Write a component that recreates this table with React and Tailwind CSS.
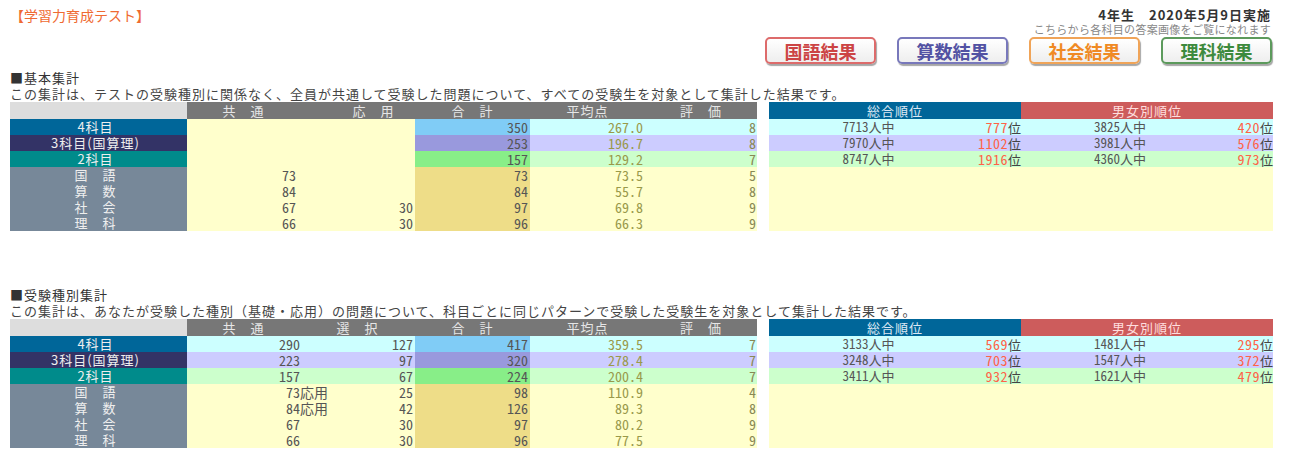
import React from "react";

const JP = "[font-family:'Noto_Sans_CJK_JP',sans-serif]";
const NUM = "[font-family:'Noto_Sans_Mono_CJK_JP','Liberation_Mono','Noto_Sans_CJK_JP',monospace]";

const ROWS = [
  { label: "4科目", labelBg: "bg-[#006699]", sumBg: "bg-[#80ccf6]", rowBg: "bg-[#ccffff]" },
  { label: "3科目(国算理)", labelBg: "bg-[#333366]", sumBg: "bg-[#9999dd]", rowBg: "bg-[#ccccff]" },
  { label: "2科目", labelBg: "bg-[#008b8b]", sumBg: "bg-[#88ee88]", rowBg: "bg-[#ccffcc]" },
  { label: "国　語", labelBg: "bg-[#778899]", sumBg: "bg-[#eedd88]", rowBg: "bg-[#ffffcc]" },
  { label: "算　数", labelBg: "bg-[#778899]", sumBg: "bg-[#eedd88]", rowBg: "bg-[#ffffcc]" },
  { label: "社　会", labelBg: "bg-[#778899]", sumBg: "bg-[#eedd88]", rowBg: "bg-[#ffffcc]" },
  { label: "理　科", labelBg: "bg-[#778899]", sumBg: "bg-[#eedd88]", rowBg: "bg-[#ffffcc]" },
];

const SEC1 = {
  heading: "■基本集計",
  desc: "この集計は、テストの受験種別に関係なく、全員が共通して受験した問題について、すべての受験生を対象として集計した結果です。",
  col2: "応　用",
  col2Pad: "pl-[32px]",
  col1Pad: "pr-[4px]",
  colored: false,
  data: [
    ["", "", "", "350", "267.0", "8"],
    ["", "", "", "253", "196.7", "8"],
    ["", "", "", "157", "129.2", "7"],
    ["73", "", "", "73", "73.5", "5"],
    ["84", "", "", "84", "55.7", "8"],
    ["67", "", "30", "97", "69.8", "9"],
    ["66", "", "30", "96", "66.3", "9"],
  ],
  ranks: [
    ["7713人中", "777", "3825人中", "420"],
    ["7970人中", "1102", "3981人中", "576"],
    ["8747人中", "1916", "4360人中", "973"],
  ],
};

const SEC2 = {
  heading: "■受験種別集計",
  desc: "この集計は、あなたが受験した種別（基礎・応用）の問題について、科目ごとに同じパターンで受験した受験生を対象として集計した結果です。",
  col2: "選　択",
  col2Pad: "pl-0",
  col1Pad: "pr-0",
  colored: true,
  data: [
    ["290", "", "127", "417", "359.5", "7"],
    ["223", "", "97", "320", "278.4", "7"],
    ["157", "", "67", "224", "200.4", "7"],
    ["73", "応用", "25", "98", "110.9", "4"],
    ["84", "応用", "42", "126", "89.3", "8"],
    ["67", "", "30", "97", "80.2", "9"],
    ["66", "", "30", "96", "77.5", "9"],
  ],
  ranks: [
    ["3133人中", "569", "1481人中", "295"],
    ["3248人中", "703", "1547人中", "372"],
    ["3411人中", "932", "1621人中", "479"],
  ],
};

function Button({ label, text, border }) {
  return (
    <div
      className={`w-[111px] h-[27px] rounded-[5px] border-2 ${border} bg-gradient-to-b from-white to-[#eeeeee] shadow-[1px_2px_1px_rgba(0,0,0,0.35)] flex items-center justify-center`}
    >
      <span className={`text-[18px] leading-[20px] font-bold ${text}`}>{label}</span>
    </div>
  );
}

function Section({ sec }) {
  return (
    <div>
      <div className="text-[13px] leading-[16px] tracking-[1px] text-[#333]">{sec.heading}</div>
      <div className="text-[13px] leading-[16px] tracking-[1px] text-[#444] whitespace-nowrap">{sec.desc}</div>
      <div className="flex gap-[12px]">
        {/* left table */}
        <div className="w-[747px]">
          <div className="grid grid-cols-[177px_113px_115px_115px_115px_112px] h-[17px] text-[13px] leading-[17px] tracking-[1px] text-[#e6e6e6]">
            <div className="bg-[#dddddd]"></div>
            <div className="bg-[#777777] text-center">共　通</div>
            <div className={`bg-[#777777] text-center ${sec.col2Pad}`}>{sec.col2}</div>
            <div className="bg-[#777777] text-center">合　計</div>
            <div className="bg-[#777777] text-center">平均点</div>
            <div className="bg-[#777777] text-center">評　価</div>
          </div>
          {ROWS.map((r, i) => {
            const d = sec.data[i];
            const firstBg = sec.colored ? r.rowBg : "bg-[#ffffcc]";
            return (
              <div
                key={i}
                className="grid grid-cols-[177px_113px_115px_115px_115px_112px] h-[16px] leading-[16px]"
              >
                <div className={`${r.labelBg} text-center text-[13px] tracking-[1px] text-[#eeeeee] pr-[6px]`}>
                  {r.label}
                </div>
                <div className={`${firstBg} ${NUM} text-[14px] text-[#555] text-right ${sec.col1Pad}`}>{d[0]}</div>
                <div className={`${firstBg} ${NUM} text-[14px] text-[#555] flex justify-between pr-[2px]`}>
                  <span>{d[1]}</span>
                  <span>{d[2]}</span>
                </div>
                <div className={`${r.sumBg} ${NUM} text-[14px] text-[#555] text-right pr-[2px]`}>{d[3]}</div>
                <div className={`${r.rowBg} ${NUM} text-[14px] text-[#99994a] text-right pr-[2px]`}>{d[4]}</div>
                <div className={`${r.rowBg} ${NUM} text-[14px] text-[#888855] text-right pr-[1px]`}>{d[5]}</div>
              </div>
            );
          })}
        </div>
        {/* right table */}
        <div className="w-[504px]">
          <div className="grid grid-cols-[252px_252px] h-[17px] text-[13px] leading-[17px] tracking-[1px]">
            <div className="bg-[#006699] text-center text-[#dde8f4]">総合順位</div>
            <div className="bg-[#cd5c5c] text-center text-[#ffdede]">男女別順位</div>
          </div>
          {sec.ranks.map((k, i) => (
            <div
              key={i}
              className={`grid grid-cols-[199px_53px_198px_54px] h-[16px] leading-[16px] ${ROWS[i].rowBg} ${NUM} text-[13px]`}
            >
              <div className="text-center text-[#555]">{k[0]}</div>
              <div className="text-right text-[#444]">
                <span className="text-[14px] text-[#ff6347] tracking-[0.5px]">{k[1]}</span>位
              </div>
              <div className="text-center text-[#555]">{k[2]}</div>
              <div className="text-right text-[#444]">
                <span className="text-[14px] text-[#ff6347] tracking-[0.5px]">{k[3]}</span>位
              </div>
            </div>
          ))}
          <div className="h-[64px] bg-[#ffffcc]"></div>
        </div>
      </div>
    </div>
  );
}

export default function App() {
  return (
    <div className={`w-[1300px] h-[465px] bg-white overflow-hidden pl-[10px] ${JP}`}>
      <div className="w-[1263px]">
        <div className="flex justify-between h-[70px]">
          <div className="pt-[7px] text-[14px] leading-[16px] text-[#ef6a32]">
            【学習力育成テスト】
          </div>
          <div className="flex flex-col items-end pt-[7px]">
            <div className="text-[13px] leading-[15px] font-bold tracking-[1px] text-[#333] pr-[2px]">
              4年生　2020年5月9日実施
            </div>
            <div className="text-[11px] leading-[14px] tracking-[0.3px] text-[#888] pr-[2px]">
              こちらから各科目の答案画像をご覧になれます
            </div>
            <div className="flex gap-[21px] mt-[1px] pr-[1px]">
              <Button label="国語結果" text="text-[#cc4444]" border="border-[#dd6b6b]" />
              <Button label="算数結果" text="text-[#5252a3]" border="border-[#7878bb]" />
              <Button label="社会結果" text="text-[#f08a24]" border="border-[#f0a458]" />
              <Button label="理科結果" text="text-[#3d8a3d]" border="border-[#5c9a5c]" />
            </div>
          </div>
        </div>
        <Section sec={SEC1} />
        <div className="h-[56px]"></div>
        <Section sec={SEC2} />
      </div>
    </div>
  );
}
